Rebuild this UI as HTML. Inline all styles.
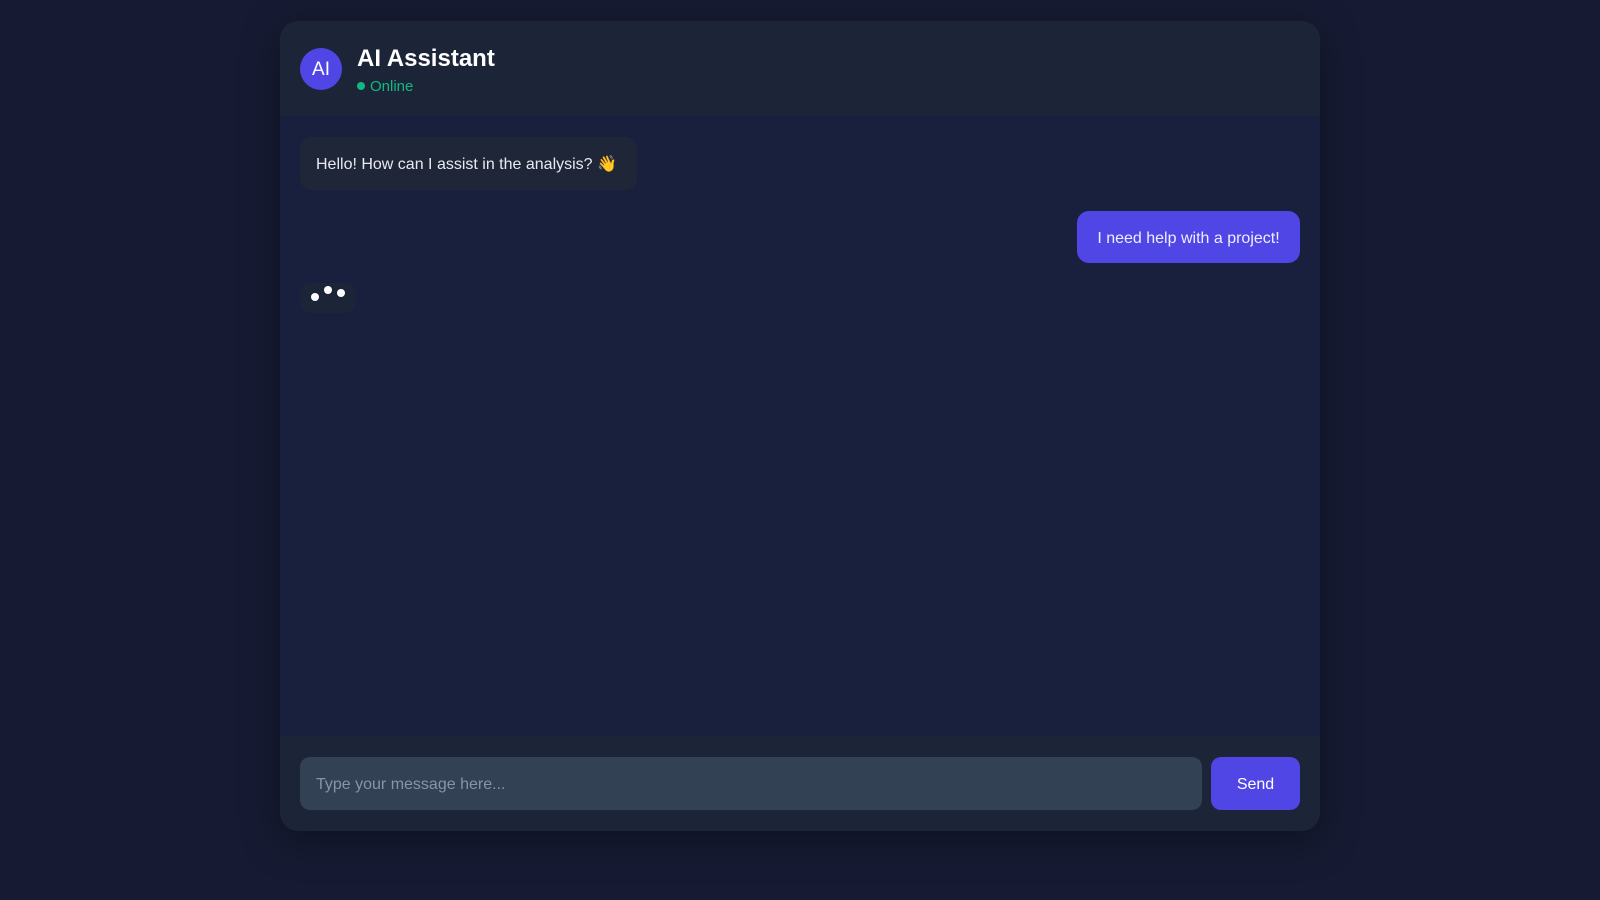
<!DOCTYPE html>
<html><head><meta charset="utf-8"><style>
*{box-sizing:border-box;margin:0;padding:0}
body{width:1600px;height:900px;background:#161b33;font-family:"Liberation Sans",sans-serif;position:relative;overflow:hidden}
.c{position:absolute;left:280px;top:21px;width:1040px;height:810px;border-radius:18px;overflow:hidden;background:#19203d;box-shadow:0 10px 40px rgba(0,0,0,.35)}
.h{height:95px;background:#1c2438;position:relative}
.av{position:absolute;left:20px;top:27px;width:42px;height:42px;border-radius:50%;background:#4f46e5;color:#fff;font-size:19px;line-height:44px;text-align:center}
.t{position:absolute;left:77px;top:24px;color:#fff;font-weight:bold;font-size:24px}
.s{position:absolute;left:77px;top:57px;color:#10b981;font-size:15px}
.s i{display:inline-block;width:8px;height:8px;border-radius:50%;background:#10b981;margin-right:5px;vertical-align:1px}
.b1{position:absolute;left:20px;top:116px;width:337px;height:53px;border-radius:12px;background:#1e2638;color:#e8eaf0;font-size:16px;line-height:55px;padding-left:16px}
.b2{position:absolute;left:797px;top:190px;width:223px;height:52px;border-radius:12px;background:#4f46e5;color:#eef;font-size:16px;line-height:56px;text-align:center}
.d{position:absolute;left:20px;top:262px;width:56px;height:30px;border-radius:10px;background:#1c2438}
.d b{position:absolute;width:8px;height:8px;border-radius:50%;background:#fff}
.f{position:absolute;left:0;top:715px;width:1040px;height:95px;background:#1c2438}
.in{position:absolute;left:20px;top:21px;width:902px;height:53px;border-radius:10px;background:#334155;color:#8a93a3;font-size:16px;line-height:55px;padding-left:16px}
.sd{position:absolute;left:931px;top:21px;width:89px;height:53px;border-radius:10px;background:#4f46e5;color:#fff;font-size:16px;line-height:55px;text-align:center}
</style></head><body>
<div class="c">
<div class="h"><div class="av">AI</div><div class="t">AI Assistant</div><div class="s"><i></i>Online</div></div>
<div class="b1">Hello! How can I assist in the analysis? 👋</div>
<div class="b2">I need help with a project!</div>
<div class="d"><b style="left:11px;top:10px"></b><b style="left:24px;top:3px"></b><b style="left:37px;top:6px"></b></div>
<div class="f"><div class="in">Type your message here...</div><div class="sd">Send</div></div>
</div>
</body></html>
